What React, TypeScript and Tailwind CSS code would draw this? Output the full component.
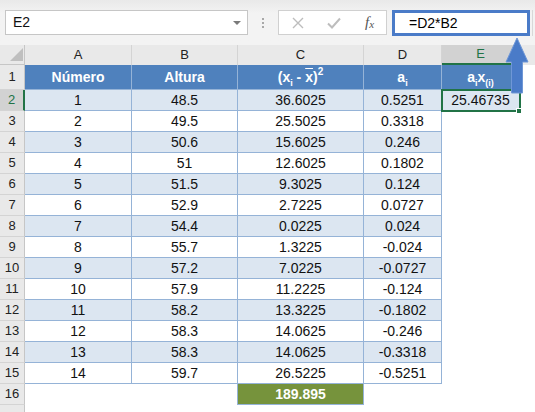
import React from 'react'

const rows: [string, string, string, string][] = [
  ['1', '48.5', '36.6025', '0.5251'],
  ['2', '49.5', '25.5025', '0.3318'],
  ['3', '50.6', '15.6025', '0.246'],
  ['4', '51', '12.6025', '0.1802'],
  ['5', '51.5', '9.3025', '0.124'],
  ['6', '52.9', '2.7225', '0.0727'],
  ['7', '54.4', '0.0225', '0.024'],
  ['8', '55.7', '1.3225', '-0.024'],
  ['9', '57.2', '7.0225', '-0.0727'],
  ['10', '57.9', '11.2225', '-0.124'],
  ['11', '58.2', '13.3225', '-0.1802'],
  ['12', '58.3', '14.0625', '-0.246'],
  ['13', '58.3', '14.0625', '-0.3318'],
  ['14', '59.7', '26.5225', '-0.5251'],
]

const colW = ['w-[107px]', 'w-[106px]', 'w-[126px]', 'w-[78px]']

function RowHead({ n, active, h }: { n?: number; active?: boolean; h: string }) {
  return (
    <div
      className={`${h} w-[25px] shrink-0 flex items-center justify-center text-[13px] border-b border-[#d4d4d4] ${
        active
          ? 'bg-[#d2d2d2] text-[#217346] border-r-2 border-r-[#217346]'
          : 'bg-[#e9e9e9] text-[#222] border-r border-r-[#c6c6c6]'
      }`}
    >
      {n}
    </div>
  )
}

function Sub({ children }: { children: React.ReactNode }) {
  return <span className="relative top-[4px] text-[9px]">{children}</span>
}

export default function App() {
  return (
    <div className="relative w-[535px] h-[412px] overflow-hidden bg-white font-['Liberation_Sans',Arial,sans-serif] text-[14px] text-[#111]">
      {/* formula bar */}
      <div className="h-[45px] flex items-start pt-[10px] bg-gradient-to-b from-[#e9e9e9] to-[#f3f3f3] to-[30%]">
        <div className="ml-[5px] w-[243px] h-[25px] bg-white border border-[#c6c6c6] flex items-center pl-[7px] pr-[6px]">
          <span className="flex-1">E2</span>
          <span className="w-0 h-0 border-l-[4px] border-r-[4px] border-t-[4px] border-l-transparent border-r-transparent border-t-[#7a7a7a]" />
        </div>
        <div className="w-[30px] h-[25px] flex flex-col items-center justify-center gap-[2px]">
          <span className="w-[2px] h-[2px] bg-[#a8a8a8]" />
          <span className="w-[2px] h-[2px] bg-[#a8a8a8]" />
          <span className="w-[2px] h-[2px] bg-[#a8a8a8]" />
        </div>
        <div className="w-[109px] h-[25px] bg-white border border-[#d0d0d0] flex items-center">
          <svg className="ml-[13px]" width="12" height="12" viewBox="0 0 12 12">
            <path d="M1 1L11 11M11 1L1 11" stroke="#bdbdbd" strokeWidth="1.4" />
          </svg>
          <svg className="ml-[23px]" width="14" height="12" viewBox="0 0 14 12">
            <path d="M1 6.5L5 10.5L13 1.5" fill="none" stroke="#bdbdbd" strokeWidth="2" />
          </svg>
          <span className="ml-[24px] font-['Liberation_Serif',serif] italic text-[#555] text-[15px] leading-none">
            f<span className="text-[11px] relative top-[1px]">x</span>
          </span>
        </div>
        <div className="ml-[5px] w-[138px] h-[26px] bg-white border-[3px] border-[#4a7bc8] flex items-center pl-[14px] text-[14px] text-black">
          =D2*B2
        </div>
        <div className="ml-[2px] w-[1px] h-[26px] bg-[#d8d8d8]" />
      </div>

      {/* column headers */}
      <div className="flex h-[20px]">
        <div className="w-[25px] h-[20px] bg-[#e9e9e9] border-r border-b border-[#c6c6c6] relative">
          <svg className="absolute left-[10px] top-[3px]" width="13" height="13" viewBox="0 0 13 13">
            <path d="M13 0L13 13L0 13Z" fill="#bfbfbf" />
          </svg>
        </div>
        {['A', 'B', 'C', 'D'].map((c, i) => (
          <div
            key={c}
            className={`${colW[i]} h-[20px] bg-[#e9e9e9] border-r border-[#d4d4d4] flex items-center justify-center text-[13px] text-[#222]`}
          >
            {c}
          </div>
        ))}
        <div className="w-[78px] h-[20px] bg-[#d2d2d2] border-r border-[#c6c6c6] border-b-2 border-b-[#217346] flex items-center justify-center text-[13px] text-[#217346]">
          E
        </div>
        <div className="flex-1 h-[20px] bg-[#e9e9e9]" />
      </div>

      {/* row 1: table header */}
      <div className="flex h-[25px]">
        <RowHead n={1} h="h-[25px]" />
        <div className="w-[107px] bg-[#4f81bd] border-r border-b border-[#95b3d7] flex items-center justify-center font-bold text-white">
          Número
        </div>
        <div className="w-[106px] bg-[#4f81bd] border-r border-b border-[#95b3d7] flex items-center justify-center font-bold text-white">
          Altura
        </div>
        <div className="w-[126px] bg-[#4f81bd] border-r border-b border-[#95b3d7] flex items-center justify-center font-bold text-white">
          <span>
            (x<Sub>i</Sub> - <span className="overline">x</span>)
            <span className="relative -top-[7px] text-[10px]">2</span>
          </span>
        </div>
        <div className="w-[78px] bg-[#4f81bd] border-r border-b border-[#95b3d7] flex items-center justify-center font-bold text-white">
          <span>
            a<Sub>i</Sub>
          </span>
        </div>
        <div className="w-[78px] bg-[#4f81bd] border-r border-b border-[#95b3d7] flex items-center justify-center font-bold text-white">
          <span>
            a<Sub>i</Sub>x<Sub>(i)</Sub>
          </span>
        </div>
        <div className="flex-1" />
      </div>

      {/* data rows */}
      {rows.map((r, idx) => {
        const band = idx % 2 === 0 ? 'bg-[#dce6f1]' : 'bg-white'
        return (
          <div key={idx} className="flex h-[21px]">
            <RowHead n={idx + 2} active={idx === 0} h="h-[21px]" />
            {r.map((v, i) => (
              <div
                key={i}
                className={`${colW[i]} ${band} border-r border-b border-[#95b3d7] flex items-center justify-center`}
              >
                {v}
              </div>
            ))}
            {idx === 0 ? (
              <div className="w-[78px] bg-[#dce6f1] border-r border-b border-[#95b3d7] flex items-center justify-center">
                25.46735
              </div>
            ) : (
              <div className="w-[78px]" />
            )}
            <div className="flex-1" />
          </div>
        )
      })}

      {/* row 16: total */}
      <div className="flex h-[21px]">
        <RowHead n={16} h="h-[21px]" />
        <div className="w-[107px]" />
        <div className="w-[106px] border-r border-[#95b3d7]" />
        <div className="w-[126px] bg-[#76933c] border-r border-b border-[#95b3d7] flex items-center justify-center font-bold text-white">
          189.895
        </div>
        <div className="flex-1" />
      </div>

      {/* row 17 (only the top edge shows) */}
      <div className="flex h-[21px]">
        <RowHead h="h-[21px]" />
      </div>

      {/* selection on E2 */}
      <div className="absolute left-[441px] top-[89px] w-[80px] h-[23px] border-2 border-[#217346]" />
      <div className="absolute left-[516px] top-[108px] w-[6px] h-[6px] bg-[#217346] border border-white" />

      {/* arrow pointing to formula */}
      <svg className="absolute left-[504px] top-[37px]" width="26" height="58" viewBox="0 0 26 58">
        <path d="M13 1L24 25L18.5 25L18.5 56L7.5 56L7.5 25L2 25Z" fill="#4a7bc8" stroke="#6f97d6" strokeWidth="1" />
      </svg>
    </div>
  )
}
